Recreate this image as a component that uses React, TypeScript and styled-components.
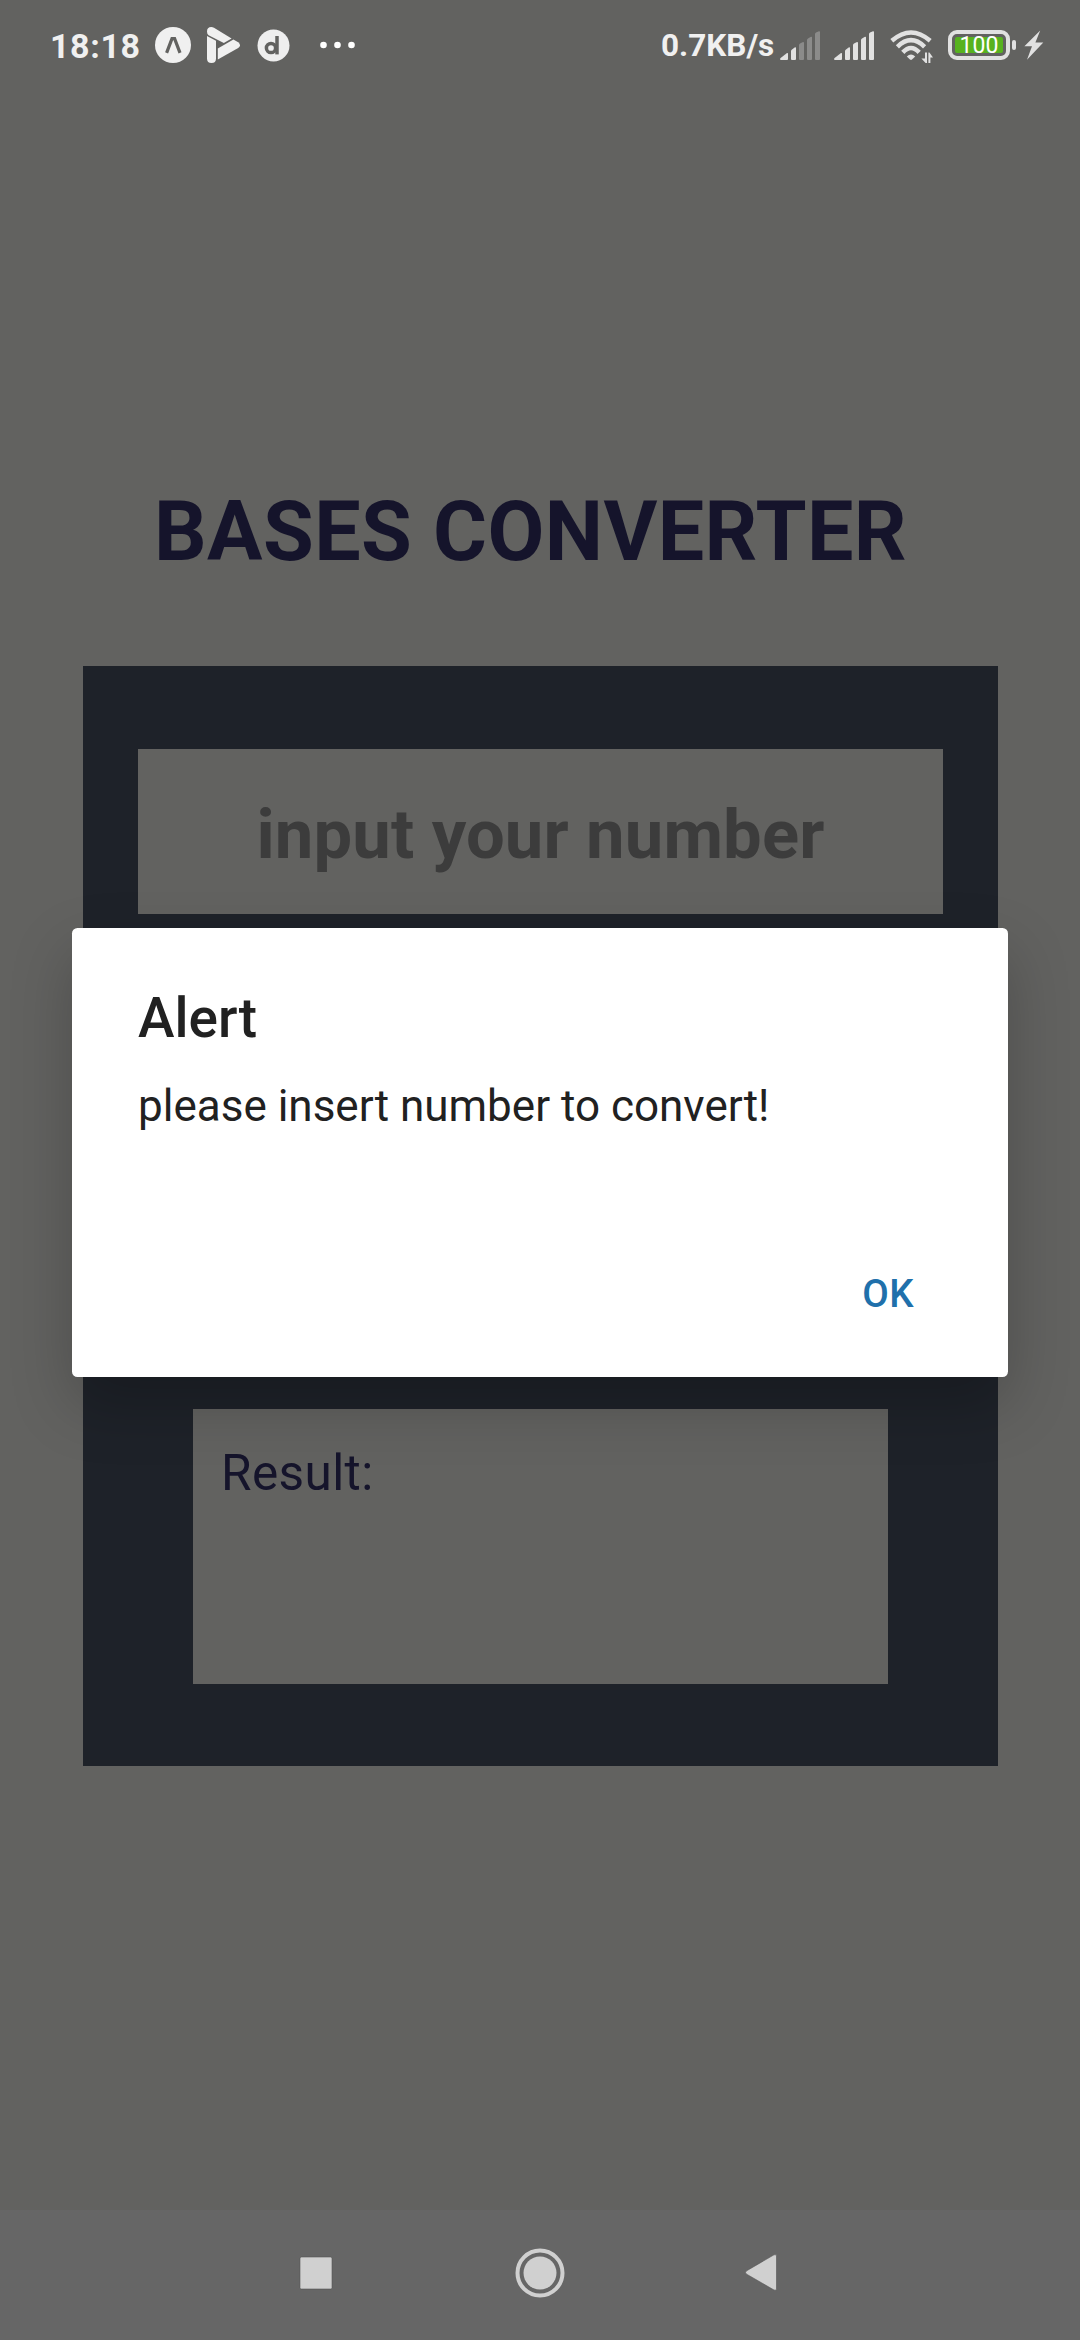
import React from "react";
import styled, { createGlobalStyle } from "styled-components";

const GlobalStyle = createGlobalStyle`
  * { box-sizing: border-box; }
  html, body { margin: 0; padding: 0; }
  body { background: #626260; font-family: Roboto, "Noto Sans", sans-serif; }
  h1, h2, p { margin: 0; }
`;

const Screen = styled.div`
  position: relative;
  display: flex;
  flex-direction: column;
  width: 1080px;
  height: 2340px;
  overflow: hidden;
  background: #626260;
`;

const StatusBar = styled.header`
  display: flex;
  align-items: center;
  justify-content: space-between;
  height: 90px;
  padding: 0 36px 0 50px;
  color: #f0f0f0;
  flex: none;
`;

const StatusGroup = styled.div`
  display: flex;
  align-items: center;
`;

const Clock = styled.span`
  width: 105px;
  padding-top: 2px;
  font-size: 34px;
  line-height: 40px;
  font-weight: 700;
  letter-spacing: 0.6px;
  white-space: nowrap;
`;

const Speed = styled.span`
  width: 119px;
  padding-top: 2px;
  font-size: 31.5px;
  line-height: 40px;
  font-weight: 700;
  white-space: nowrap;
`;

const Icon = styled.svg<{ $gap?: number }>`
  display: block;
  flex: none;
  margin-left: ${(p) => p.$gap ?? 0}px;
  overflow: visible;
`;

const Battery = styled.div`
  display: flex;
  align-items: center;
  margin-left: 16px;
`;

const BatteryShell = styled.div`
  display: flex;
  width: 62px;
  height: 30px;
  padding: 3px;
  border: 4px solid #e1e1e1;
  border-radius: 9px;
`;

const BatteryLevel = styled.div`
  flex: 1;
  display: flex;
  align-items: center;
  justify-content: center;
  padding-top: 1px;
  border-radius: 2px;
  background: #57b21f;
  color: #fff;
  font-size: 23px;
  line-height: 16px;
  font-weight: 400;
`;

const BatteryTip = styled.div`
  width: 4px;
  height: 10px;
  margin-left: 2px;
  border-radius: 2px;
  background: #e1e1e1;
`;

const Page = styled.main`
  flex: 1;
  display: flex;
  flex-direction: column;
  padding: 390px 82px 0 83px;
`;

const Title = styled.h1`
  height: 186px;
  padding: 3px 0 0 71px;
  font-size: 82.5px;
  line-height: 97px;
  font-weight: 700;
  letter-spacing: 0.42px;
  color: #15142b;
  white-space: nowrap;
`;

const Card = styled.section`
  display: flex;
  flex-direction: column;
  justify-content: space-between;
  align-items: center;
  height: 1100px;
  padding: 83px 55px 82px;
  background: #1e2229;
`;

const NumberInput = styled.input`
  width: 805px;
  height: 165px;
  padding: 5px 0 0 0;
  border: 0;
  border-radius: 0;
  background: #626260;
  color: #3c3c3c;
  font: 700 68.75px Roboto, "Noto Sans", sans-serif;
  letter-spacing: 0.15px;
  text-align: center;
  outline: none;
  &::placeholder { color: #3c3c3c; opacity: 1; }
`;

const ResultBox = styled.div`
  width: 695px;
  height: 275px;
  padding: 35px 28px;
  background: #626260;
  color: #15142b;
  font-size: 49.5px;
  line-height: 58px;
  letter-spacing: 0.4px;
`;

const NavBar = styled.nav`
  display: flex;
  align-items: center;
  justify-content: center;
  height: 130px;
  padding-bottom: 5px;
  background: #666;
  flex: none;
`;

const NavButton = styled.button<{ $inset?: number }>`
  display: flex;
  align-items: center;
  justify-content: center;
  width: 222px;
  height: 100%;
  padding: 0 ${(p) => p.$inset ?? 0}px 0 0;
  border: 0;
  background: none;
`;

const Overlay = styled.div`
  position: absolute;
  inset: 0;
  display: flex;
  justify-content: center;
  align-items: flex-start;
  padding-top: 928px;
`;

const Dialog = styled.div`
  display: flex;
  flex-direction: column;
  width: 936px;
  height: 449px;
  padding: 57px 66px 0;
  border-radius: 5.5px;
  background: #fff;
  color: #212121;
  box-shadow: 0 26px 62px rgba(0, 0, 0, 0.22);
`;

const DialogTitle = styled.h2`
  font-size: 55px;
  line-height: 66px;
  font-weight: 500;
`;

const DialogText = styled.p`
  flex: 1;
  padding-top: 29px;
  font-size: 44px;
  line-height: 52px;
  white-space: nowrap;
`;

const DialogActions = styled.div`
  display: flex;
  justify-content: flex-end;
  height: 132px;
  padding: 24px 28px 0 0;
`;

const DialogButton = styled.button`
  align-self: flex-start;
  padding: 0;
  border: 0;
  background: none;
  color: #2070ab;
  font: 500 38.5px/50px Roboto, "Noto Sans", sans-serif;
  letter-spacing: 0.4px;
`;

const SIGNAL_BARS = [
  "M0.3 27.2 L7 22.1 Q8 21.5 8 22.6 V28 Q8 29 7 29 H1 Q-0.7 29 0.3 27.2Z",
  "M11 20 Q11 19 12 18.4 L15 16.3 Q16 16 16 17 V28 Q16 29 15 29 H12 Q11 29 11 28Z",
  "M19 14 Q19 13 20 12.5 L23 11 Q24 10.8 24 12 V28 Q24 29 23 29 H20 Q19 29 19 28Z",
  "M27 9 Q27 8 28 7.4 L31 5.8 Q32 5.4 32 6.5 V28 Q32 29 31 29 H28 Q27 29 27 28Z",
  "M35 3 Q35 2.2 36 1.6 L39 0.2 Q40 0 40 1 V28 Q40 29 39 29 H36 Q35 29 35 28Z",
];

function SignalIcon({ active, gap }: { active: number; gap?: number }) {
  return (
    <Icon $gap={gap} width="40" height="29" viewBox="0 0 40 29">
      {SIGNAL_BARS.map((d, i) => (
        <path key={d} d={d} fill={i < active ? "#e1e1e1" : "#8b8b8a"} />
      ))}
    </Icon>
  );
}

export default function App() {
  return (
    <>
      <GlobalStyle />
      <Screen>
        <StatusBar>
          <StatusGroup>
            <Clock>18:18</Clock>
            <Icon width="36" height="36" viewBox="0 0 36 36">
              <circle cx="18" cy="18" r="18" fill="#f0f0f0" />
              <path d="M11.6 25.9 L17 11.6 H19.6 L25 25.9" fill="none" stroke="#626260" strokeWidth="3.2" />
            </Icon>
            <Icon $gap={16} width="33" height="36" viewBox="0 0 33 36">
              <g fill="#f0f0f0">
                <path d="M0 4.6 Q0 0 4.3 0 Q5.6 0 7 .8 L24.6 11.4 L16.8 16 L1.6 8.2 Q0 7 0 4.6Z" />
                <path d="M0 9 L9 13.8 V31.5 Q9 36 4.5 36 Q0 36 0 31.5Z" />
                <path d="M10.8 21.4 L26.4 12.4 L31.2 15.2 Q33 16.6 33 18.2 Q33 19.8 31.2 21 L10.8 32.6Z" />
              </g>
            </Icon>
            <Icon $gap={17} width="33" height="33" viewBox="0 0 33 33">
              <circle cx="16.5" cy="16.5" r="16" fill="#eee" />
              <circle cx="14" cy="19" r="4.6" fill="none" stroke="#626260" strokeWidth="3.5" />
              <path d="M20 7 V25.4" stroke="#626260" strokeWidth="3.5" />
            </Icon>
            <Icon $gap={30} width="35" height="8" viewBox="0 0 35 8">
              {[3.5, 17.5, 31.5].map((x) => (
                <circle key={x} cx={x} cy="4" r="3.3" fill="#fff" />
              ))}
            </Icon>
          </StatusGroup>
          <StatusGroup>
            <Speed>0.7KB/s</Speed>
            <SignalIcon active={2} />
            <SignalIcon active={5} gap={14} />
            <Icon $gap={16} width="42" height="31" viewBox="0 0 42 31">
              <g fill="none" stroke="#e1e1e1" strokeWidth="4.5">
                <path d="M1.8 10.8 Q21 -5.8 40.2 10.8" />
                <path d="M7.4 16.8 Q21 3.6 34.6 16.8" />
                <path d="M12.8 22.4 Q21 13.6 29.2 22.4" />
              </g>
              <path d="M16.8 26.4 Q21 22.4 25.2 26.4 L22 29.6 Q21 30.4 20 29.6Z" fill="#e1e1e1" />
              <g fill="#e1e1e1">
                <path d="M35 22.5 H37 V33 H35.6 L31.4 28.4 H35Z" />
                <path d="M38.4 33 H40.4 V27.4 H43 L39.4 22.5 H38.4Z" />
              </g>
            </Icon>
            <Battery>
              <BatteryShell>
                <BatteryLevel>100</BatteryLevel>
              </BatteryShell>
              <BatteryTip />
            </Battery>
            <Icon $gap={8} width="20" height="30" viewBox="0 0 20 30">
              <path d="M16.2 0.5 L0.4 16.2 H8 L3 29.7 L19.3 12.4 H11.4Z" fill="#e1e1e1" />
            </Icon>
          </StatusGroup>
        </StatusBar>
        <Page>
          <Title>BASES CONVERTER</Title>
          <Card>
            <NumberInput placeholder="input your number" />
            <ResultBox>Result:</ResultBox>
          </Card>
        </Page>
        <NavBar>
          <NavButton aria-label="Recents" $inset={4}>
            <Icon width="34" height="34" viewBox="0 0 34 34">
              <rect x="1" y="1" width="32" height="32" rx="1.5" fill="#d0d0d0" stroke="#565656" strokeWidth="0.6" />
            </Icon>
          </NavButton>
          <NavButton aria-label="Home">
            <Icon width="50" height="50" viewBox="0 0 50 50">
              <circle cx="25" cy="25" r="22.5" fill="none" stroke="#d0d0d0" strokeWidth="4" />
              <circle cx="25" cy="25" r="16.5" fill="#d0d0d0" />
            </Icon>
          </NavButton>
          <NavButton aria-label="Back" $inset={2}>
            <Icon width="32" height="37" viewBox="0 0 32 37">
              <path d="M1.3 17 L29 .8 Q31.5 0 31.5 2 V35 Q31.5 37 29 36 L1.3 20 Q-.3 18.5 1.3 17Z" fill="#d0d0d0" stroke="#565656" strokeWidth="0.6" />
            </Icon>
          </NavButton>
        </NavBar>
        <Overlay>
          <Dialog role="alertdialog">
            <DialogTitle>Alert</DialogTitle>
            <DialogText>please insert number to convert!</DialogText>
            <DialogActions>
              <DialogButton>OK</DialogButton>
            </DialogActions>
          </Dialog>
        </Overlay>
      </Screen>
    </>
  );
}
